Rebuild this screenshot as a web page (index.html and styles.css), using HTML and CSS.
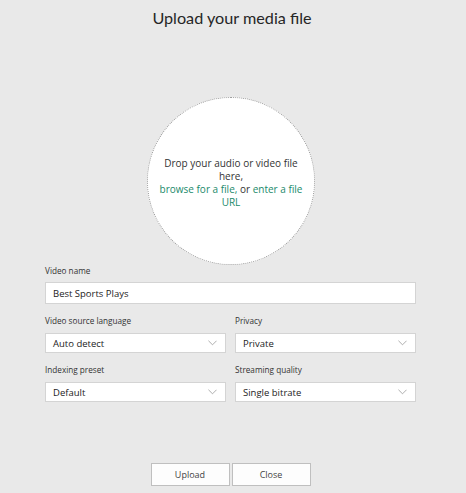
FILE: index.html
```html
<!DOCTYPE html>
<html>
<head>
<meta charset="utf-8">
<link rel="stylesheet" href="styles.css">
</head>
<body>
<div class="page">
  <h1 class="title">Upload your media file</h1>
  <div class="drop">
    <div class="drop-text">
      Drop your audio or video file<br>here,<br>
      <a class="link">browse for a file,</a> or <a class="link">enter a file<br>URL</a>
    </div>
  </div>
  <div class="form">
    <div class="field">
      <div class="label label-name">Video name</div>
      <div class="input text-input">Best Sports Plays</div>
    </div>
    <div class="row">
      <div class="field">
        <div class="label">Video source language</div>
        <div class="input">Auto detect<svg class="chev" viewBox="0 0 10 6"><path d="M0.5 0.5 L5 5 L9.5 0.5" fill="none" stroke="#999" stroke-width="0.9"/></svg></div>
      </div>
      <div class="field">
        <div class="label">Privacy</div>
        <div class="input">Private<svg class="chev" viewBox="0 0 10 6"><path d="M0.5 0.5 L5 5 L9.5 0.5" fill="none" stroke="#999" stroke-width="0.9"/></svg></div>
      </div>
    </div>
    <div class="row">
      <div class="field">
        <div class="label">Indexing preset</div>
        <div class="input">Default<svg class="chev" viewBox="0 0 10 6"><path d="M0.5 0.5 L5 5 L9.5 0.5" fill="none" stroke="#999" stroke-width="0.9"/></svg></div>
      </div>
      <div class="field">
        <div class="label">Streaming quality</div>
        <div class="input">Single bitrate<svg class="chev" viewBox="0 0 10 6"><path d="M0.5 0.5 L5 5 L9.5 0.5" fill="none" stroke="#999" stroke-width="0.9"/></svg></div>
      </div>
    </div>
  </div>
  <div class="buttons">
    <button class="btn">Upload</button>
    <button class="btn">Close</button>
  </div>
</div>
</body>
</html>
```
FILE: styles.css
```css
html, body {
  margin: 0;
  padding: 0;
  background: #e9e9e9;
  width: 466px;
  height: 493px;
  overflow: hidden;
}
body {
  font-family: "Open Sans", "Noto Sans", sans-serif;
  color: #333;
}
.page {
  display: flex;
  flex-direction: column;
  align-items: center;
}
.title {
  margin: 7px 0 0 -2px;
  font-family: Lato, "Open Sans", sans-serif;
  font-size: 16.2px;
  font-weight: 400;
  line-height: 22px;
  color: #262626;
}
.drop {
  margin-top: 68px;
  margin-left: -4px;
  width: 166px;
  height: 166px;
  border: 1px dotted #9a9a9a;
  border-radius: 50%;
  background: #fff;
  display: flex;
  align-items: center;
  justify-content: center;
}
.drop-text {
  font-size: 10px;
  line-height: 13px;
  text-align: center;
  color: #333;
  margin-top: 4px;
}
.link {
  color: #1a8a6b;
}
.form {
  align-self: flex-start;
  width: 371px;
  margin-left: 45px;
  margin-top: -1px;
  display: flex;
  flex-direction: column;
  gap: 10px;
}
.row {
  display: grid;
  grid-template-columns: 1fr 1fr;
  gap: 9px;
}
.label {
  font-size: 8.2px;
  line-height: 14px;
  color: #333;
  margin-bottom: 5px;
}
.label-name {
  margin-bottom: 4px;
}
.input {
  box-sizing: border-box;
  height: 20px;
  background: #fff;
  border: 1px solid #d4d4d4;
  font-size: 9.5px;
  padding: 0 7px;
  color: #222;
  display: flex;
  align-items: center;
  justify-content: space-between;
}
.text-input {
  height: 22px;
}
.chev {
  width: 9px;
  height: 6px;
  margin-right: 1px;
}
.buttons {
  margin-top: 61px;
  margin-left: -5px;
  display: flex;
  gap: 2px;
}
.btn {
  width: 79px;
  height: 23px;
  background: #fdfdfd;
  border: 1px solid #bfbfbf;
  font-family: "Open Sans", "Noto Sans", sans-serif;
  font-size: 9px;
  color: #444;
  padding: 0;
}
```
